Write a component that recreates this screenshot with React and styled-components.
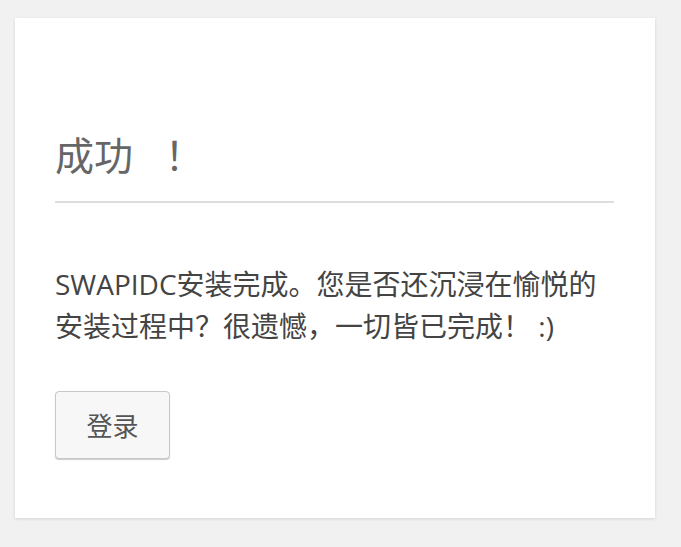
import React from "react";
import styled, { createGlobalStyle } from "styled-components";

const GlobalStyle = createGlobalStyle`
  html, body {
    margin: 0;
    padding: 0;
    background: #f1f1f1;
  }
  body {
    font-family: "Open Sans", "Noto Sans CJK SC", sans-serif;
  }
`;

const Page = styled.div`
  padding: 18px 26px 29px 15px;
`;

const Card = styled.div`
  width: 640px;
  height: 500px;
  box-sizing: border-box;
  background: #fff;
  padding: 0 41px 0 40px;
  box-shadow: 0 1px 3px rgba(0, 0, 0, 0.13);
`;

const Title = styled.h1`
  margin: 0;
  padding: 107px 0 18px;
  font-size: 39px;
  line-height: 56px;
  font-weight: 400;
  color: #666;
  border-bottom: 2px solid #ddd;
`;

const Mark = styled.span`
  font-family: "Noto Sans CJK TC", sans-serif;
  margin-left: 22px;
`;

const Text = styled.p`
  margin: 60px 0 0;
  font-size: 28px;
  line-height: 42px;
  color: #444;
`;

const Button = styled.button`
  margin-top: 44px;
  width: 115px;
  height: 68px;
  font-family: inherit;
  font-size: 26px;
  color: #555;
  background: #f7f7f7;
  border: 1px solid #c8c8c8;
  border-radius: 4px;
  box-shadow: 0 1px 1px #ccc;
  cursor: pointer;
`;

export default function App() {
  return (
    <>
      <GlobalStyle />
      <Page>
        <Card>
          <Title>
            成功<Mark>！</Mark>
          </Title>
          <Text>SWAPIDC安装完成。您是否还沉浸在愉悦的安装过程中？很遗憾，一切皆已完成！ :)</Text>
          <Button>登录</Button>
        </Card>
      </Page>
    </>
  );
}
